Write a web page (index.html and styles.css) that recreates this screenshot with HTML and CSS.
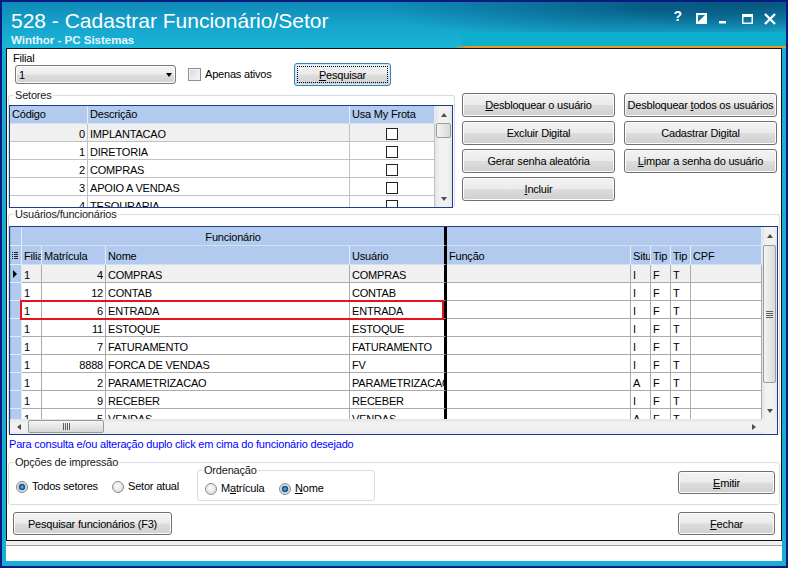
FILE: index.html
```html
<!DOCTYPE html>
<html lang="pt-BR">
<head>
  <meta charset="UTF-8">
  <meta name="viewport" content="width=device-width, initial-scale=1.0">
  <title>528 - Cadastrar Funcionário/Setor</title>
  <link rel="stylesheet" href="styles.css">
</head>
<body>
  <div class="window">
    <div class="titlebar">
      <div class="title-text">
        <h1>528 - Cadastrar Funcionário/Setor</h1>
        <div class="subtitle">Winthor - PC Sistemas</div>
      </div>
      <div class="controls">
        <span class="ctl-help">?</span>
        <svg class="ctl-icons" width="81" height="12" viewBox="0 0 81 12">
          <rect x="0" y="0" width="11" height="11" fill="#fff"/>
          <polygon points="2,2 9,2 2,9" fill="#0d7aa3"/>
          <rect x="23" y="8" width="7" height="2.5" fill="#fff"/>
          <rect x="46" y="1" width="11" height="3" fill="#fff"/>
          <rect x="46.75" y="1.75" width="9.5" height="8.5" fill="none" stroke="#fff" stroke-width="1.5"/>
          <path d="M69 1 L79 11 M79 1 L69 11" stroke="#fff" stroke-width="2.4" fill="none"/>
        </svg>
      </div>
      <div class="title-band"></div>
      <div class="title-line"></div>
    </div>

    <div class="panel">
      <!-- Filial / pesquisa -->
      <div class="filter-row">
        <div class="field-filial">
          <label>Filial</label>
          <div class="combo"><span>1</span><span class="arr-down dark"></span></div>
        </div>
        <label class="check chk-apenas"><span class="check-box"></span><span>Apenas ativos</span></label>
        <button class="btn btn-focus btn-pesquisar"><u>P</u>esquisar</button>
      </div>

      <div class="middle">
        <fieldset class="group group-setores">
          <legend>Setores</legend>
          <div class="grid grid-setores">
            <div class="grid-body">
              <div class="stable">
                <div class="c h">Código</div>
                <div class="c h">Descrição</div>
                <div class="c h">Usa My Frota</div>

                <div class="c num cur">0</div>
                <div class="c cur">IMPLANTACAO</div>
                <div class="c cur chk-cell"><span class="cbx"></span></div>

                <div class="c num">1</div>
                <div class="c">DIRETORIA</div>
                <div class="c chk-cell"><span class="cbx"></span></div>

                <div class="c num">2</div>
                <div class="c">COMPRAS</div>
                <div class="c chk-cell"><span class="cbx"></span></div>

                <div class="c num">3</div>
                <div class="c">APOIO A VENDAS</div>
                <div class="c chk-cell"><span class="cbx"></span></div>

                <div class="c num">4</div>
                <div class="c">TESOURARIA</div>
                <div class="c chk-cell"><span class="cbx"></span></div>
              </div>
            </div>
            <div class="vscroll vscroll-setores">
              <div class="sb-btn"><span class="arr-up"></span></div>
              <div class="sb-thumb-v thumb-setores"></div>
              <div class="sb-space"></div>
              <div class="sb-btn"><span class="arr-down"></span></div>
            </div>
          </div>
        </fieldset>

        <div class="actions">
          <button class="btn"><u>D</u>esbloquear o usuário</button>
          <button class="btn">Desbloquear <u>t</u>odos os usuários</button>
          <button class="btn">Excluir Digital</button>
          <button class="btn">Cadastrar Digital</button>
          <button class="btn">Gerar senha aleatória</button>
          <button class="btn"><u>L</u>impar a senha do usuário</button>
          <button class="btn"><u>I</u>ncluir</button>
        </div>
      </div>

      <fieldset class="group group-usuarios">
        <legend>Usuários/funcionários</legend>
        <div class="grid grid-func">
          <div class="grid-body">
            <div class="ftable">
              <div class="c h ind"></div>
              <div class="c h gh split">Funcionário</div>
              <div class="c h gh-rest"></div>

              <div class="c h ind">
                <svg class="ico-cols" width="6" height="8" viewBox="0 0 6 8">
                  <rect x="0" y="0" width="1" height="1" fill="#222"/><rect x="2" y="0" width="4" height="1" fill="#222"/>
                  <rect x="0" y="2" width="1" height="1" fill="#222"/><rect x="2" y="2" width="4" height="1" fill="#222"/>
                  <rect x="0" y="4" width="1" height="1" fill="#222"/><rect x="2" y="4" width="4" height="1" fill="#222"/>
                  <rect x="0" y="6" width="1" height="1" fill="#222"/><rect x="2" y="6" width="4" height="1" fill="#222"/>
                </svg>
              </div>
              <div class="c h">Filial</div>
              <div class="c h">Matrícula</div>
              <div class="c h">Nome</div>
              <div class="c h split">Usuário</div>
              <div class="c h">Função</div>
              <div class="c h">Situ</div>
              <div class="c h">Tip</div>
              <div class="c h">Tip</div>
              <div class="c h">CPF</div>

              <div class="c ind"><svg class="ico-cur" width="4" height="8" viewBox="0 0 4 8"><polygon points="0,0 4,4 0,8" fill="#000"/></svg></div>
              <div class="c cur">1</div><div class="c num cur">4</div><div class="c cur">COMPRAS</div><div class="c cur split">COMPRAS</div>
              <div class="c cur"></div><div class="c cur">I</div><div class="c cur">F</div><div class="c cur">T</div><div class="c cur"></div>

              <div class="c ind"></div>
              <div class="c">1</div><div class="c num">12</div><div class="c">CONTAB</div><div class="c split">CONTAB</div>
              <div class="c"></div><div class="c">I</div><div class="c">F</div><div class="c">T</div><div class="c"></div>

              <div class="c ind"></div>
              <div class="c">1</div><div class="c num">6</div><div class="c">ENTRADA</div><div class="c split">ENTRADA</div>
              <div class="c"></div><div class="c">I</div><div class="c">F</div><div class="c">T</div><div class="c"></div>

              <div class="c ind"></div>
              <div class="c">1</div><div class="c num">11</div><div class="c">ESTOQUE</div><div class="c split">ESTOQUE</div>
              <div class="c"></div><div class="c">I</div><div class="c">F</div><div class="c">T</div><div class="c"></div>

              <div class="c ind"></div>
              <div class="c">1</div><div class="c num">7</div><div class="c">FATURAMENTO</div><div class="c split">FATURAMENTO</div>
              <div class="c"></div><div class="c">I</div><div class="c">F</div><div class="c">T</div><div class="c"></div>

              <div class="c ind"></div>
              <div class="c">1</div><div class="c num">8888</div><div class="c">FORCA DE VENDAS</div><div class="c split">FV</div>
              <div class="c"></div><div class="c">I</div><div class="c">F</div><div class="c">T</div><div class="c"></div>

              <div class="c ind"></div>
              <div class="c">1</div><div class="c num">2</div><div class="c">PARAMETRIZACAO</div><div class="c split">PARAMETRIZACAO</div>
              <div class="c"></div><div class="c">A</div><div class="c">F</div><div class="c">T</div><div class="c"></div>

              <div class="c ind"></div>
              <div class="c">1</div><div class="c num">9</div><div class="c">RECEBER</div><div class="c split">RECEBER</div>
              <div class="c"></div><div class="c">I</div><div class="c">F</div><div class="c">T</div><div class="c"></div>

              <div class="c ind"></div>
              <div class="c">1</div><div class="c num">5</div><div class="c">VENDAS</div><div class="c split">VENDAS</div>
              <div class="c"></div><div class="c">A</div><div class="c">F</div><div class="c">T</div><div class="c"></div>
            </div>
            <!-- destaque da linha selecionada -->
            <div class="highlight"></div>
          </div>
          <div class="vscroll">
            <div class="sb-btn"><span class="arr-up"></span></div>
            <div class="sb-thumb-v thumb-func"><span class="grip-v"></span></div>
            <div class="sb-space"></div>
            <div class="sb-btn"><span class="arr-down"></span></div>
          </div>
          <div class="hscroll">
            <div class="sb-btn-h"><span class="arr-left"></span></div>
            <div class="sb-thumb-h"><span class="grip-h"></span></div>
            <div class="sb-space"></div>
            <div class="sb-btn-h"><span class="arr-right"></span></div>
          </div>
          <div class="corner"></div>
        </div>
      </fieldset>

      <p class="hint">Para consulta e/ou alteração duplo click em cima do funcionário desejado</p>

      <fieldset class="group group-opcoes">
        <legend>Opções de impressão</legend>
        <label class="radio radio-todos"><span class="radio-dot checked"></span><span>Todos setores</span></label>
        <label class="radio radio-setor"><span class="radio-dot"></span><span>Setor atual</span></label>
        <fieldset class="group group-ordem">
          <legend>Ordenação</legend>
          <label class="radio radio-matricula"><span class="radio-dot"></span><span>M<u>a</u>trícula</span></label>
          <label class="radio"><span class="radio-dot checked"></span><span><u>N</u>ome</span></label>
        </fieldset>
        <button class="btn btn-emitir"><u>E</u>mitir</button>
      </fieldset>

      <div class="bottom-row">
        <button class="btn btn-pesq-func">Pesquisar funcionários (F3)</button>
        <button class="btn btn-fechar"><u>F</u>echar</button>
      </div>
    </div>

    <div class="statusbar"><div class="status-field"></div></div>
  </div>
</body>
</html>
```

FILE: styles.css
```css
* {
  box-sizing: border-box;
}

body {
  margin: 0;
  background: #0b1a80;
  font-family: "Liberation Sans", Arial, sans-serif;
}

.window {
  width: 788px;
  height: 568px;
  border: 2px solid #0b1a80;
  background: #1aafd2;
  padding: 0 4px 5px;
  display: flex;
  flex-direction: column;
}

/* Barra de título */
.titlebar {
  position: relative;
  flex: none;
  height: 46px;
  margin: 0 -4px;
  padding: 0 9px;
  display: flex;
  justify-content: space-between;
  color: #fff;
  background:
    radial-gradient(ellipse 260px 34px at 640px 6px, rgba(0, 55, 95, 0.55), rgba(0, 55, 95, 0) 100%),
    radial-gradient(ellipse 160px 30px at 760px 0, rgba(0, 45, 80, 0.45), rgba(0, 45, 80, 0) 100%),
    linear-gradient(#0f89b6, #16a6cd 55%, #1ab6d9);
}

.title-text h1 {
  margin: 7px 0 0;
  font-size: 21px;
  font-weight: normal;
  line-height: 24px;
}

.subtitle {
  margin-top: 1px;
  font-size: 11.5px;
  font-weight: bold;
  line-height: 13px;
  color: #e8f6fb;
}

.controls {
  position: relative;
  z-index: 1;
  display: flex;
  align-items: flex-start;
}

.ctl-help {
  margin: 7px 14px 0 0;
  font-size: 14px;
  font-weight: bold;
  line-height: 14px;
}

.ctl-icons {
  margin-top: 11px;
}

.title-band {
  position: absolute;
  left: 460px;
  right: 0;
  top: 30px;
  height: 14px;
  background: #0cb0cc;
}

.title-line {
  position: absolute;
  left: 454px;
  right: 0;
  top: 44px;
  height: 2px;
  background: linear-gradient(90deg, rgba(232, 150, 30, 0.3), #e8961e 12px);
}

/* Painel principal */
.panel {
  flex: none;
  height: 493px;
  background: #fff;
  border: 1px solid #111;
  font-size: 11px;
  letter-spacing: -0.2px;
  color: #000;
  display: flex;
  flex-direction: column;
}

.filter-row {
  display: flex;
  align-items: flex-start;
  padding: 3px 0 0 8px;
}

.field-filial {
  width: 161px;
}

.field-filial label {
  display: block;
  margin-left: -2px;
  line-height: 13px;
}

.combo {
  height: 19px;
  padding: 0 3px 0 3px;
  display: flex;
  align-items: center;
  justify-content: space-between;
  border: 1px solid #7a7a7a;
  border-radius: 3px;
  background: linear-gradient(#f4f4f4 0%, #ececec 48%, #dedede 52%, #d2d2d2 100%);
  box-shadow: inset 0 0 0 1px #fbfbfb;
}

.check {
  display: flex;
  align-items: center;
  gap: 4px;
  line-height: 13px;
}

.chk-apenas {
  width: 106px;
  margin: 16px 0 0 12px;
}

.check-box {
  width: 13px;
  height: 13px;
  flex: none;
  border: 1px solid #8e8f8f;
  background: linear-gradient(135deg, #d8d8d8, #f9f9f9);
  box-shadow: inset 0 0 0 1px #f2f2f2;
}

/* Botões */
.btn {
  font: inherit;
  letter-spacing: inherit;
  color: #000;
  height: 23px;
  padding: 0;
  border: 1px solid #707070;
  border-radius: 3px;
  background: linear-gradient(#f3f3f3 0%, #ebebeb 48%, #dddddd 52%, #cfcfcf 100%);
  box-shadow: inset 0 0 0 1px #fcfcfc;
  white-space: nowrap;
}

.btn-focus {
  border-color: #3c7fb1;
  box-shadow: inset 0 0 0 1px #c4eefc;
  outline: 1px dotted #000;
  outline-offset: -4px;
}

.btn-pesquisar {
  width: 97px;
  margin-top: 11px;
}

.middle {
  display: flex;
  align-items: flex-start;
  margin-top: 3px;
  padding-left: 1px;
}

/* Caixas de grupo */
.group {
  margin: 0;
  min-width: 0;
  border: 1px solid #d3dde3;
  border-radius: 3px;
}

.group legend {
  padding: 0 1px;
  margin-left: 5px;
  line-height: 13px;
  color: #1a1a1a;
}

.group-setores {
  width: 447px;
  padding: 3px 1px 0 0;
  border-bottom: none;
}

.actions {
  display: grid;
  grid-template-columns: 153px 153px;
  grid-auto-rows: 24px;
  gap: 4px 9px;
  margin: 4px 0 0 7px;
}

.actions .btn {
  height: 24px;
}

.group-usuarios {
  width: 772px;
  margin-left: 1px;
  padding: 5px 1px 0 0;
  border-bottom: none;
}

.hint {
  margin: 3px 0 0;
  padding-left: 2px;
  line-height: 13px;
  color: #0000ff;
}

.group-opcoes {
  width: 772px;
  margin: 5px 0 0 1px;
  padding: 0 4px 3px 7px;
  display: flex;
  align-items: flex-start;
}

.group-opcoes > legend,
.group-ordem > legend {
  margin-left: -2px;
}

.radio {
  display: flex;
  align-items: center;
  gap: 4px;
  line-height: 13px;
}

.radio-todos {
  width: 96px;
  margin-top: 11px;
}

.radio-setor {
  width: 85px;
  margin-top: 11px;
}

.group-ordem {
  width: 178px;
  margin-top: -5px;
  padding: 5px 0 5px 7px;
  display: flex;
}

.radio-matricula {
  width: 74px;
}

.radio-dot {
  width: 12px;
  height: 12px;
  flex: none;
  border: 1px solid #8a8b8b;
  border-radius: 50%;
  background: radial-gradient(circle at 45% 40%, #fbfbfb, #d6d6d6);
}

.radio-dot.checked {
  background: radial-gradient(circle at 50% 50%, #6fb8ec 0, #2567a8 2px, #1c4f86 3px, #cfd6dc 3.6px, #f0f0f0 100%);
}

.btn-emitir {
  width: 97px;
  margin: 2px 0 0 auto;
}

.bottom-row {
  display: flex;
  justify-content: space-between;
  margin-top: 7px;
  padding: 0 6px;
}

.btn-pesq-func {
  width: 159px;
}

.btn-fechar {
  width: 97px;
}

.statusbar {
  flex: none;
  height: 20px;
  padding-top: 4px;
  background: #f0f0f0;
}

.status-field {
  height: 16px;
  border-top: 1px solid #a0a0a0;
  background: #fff;
}

/* Grades */
.grid {
  border: 1px solid #1c3b8f;
  background: #fff;
}

.grid-setores {
  display: flex;
  width: 444px;
  height: 103px;
}

.grid-setores .grid-body {
  width: 425px;
  height: 101px;
  overflow: hidden;
}

.stable {
  display: grid;
  grid-template-columns: 78px 262px 85px;
  grid-auto-rows: 18px;
}

.c {
  padding: 0 2px;
  border-right: 1px solid #ababab;
  border-bottom: 1px solid #ababab;
  white-space: nowrap;
  overflow: hidden;
  line-height: 20px;
}

.stable .c {
  border-color: #c2c2c2;
}

.c.h {
  background: #b1caee;
  border-right: 1px solid #e4ecf9;
  border-bottom: 1px solid #d3e0f4;
  line-height: 17px;
}

.ftable .c.h {
  line-height: 20px;
}

.num {
  text-align: right;
}

.cur {
  background: #f0f0f0;
}

.chk-cell {
  display: flex;
  justify-content: center;
  align-items: flex-start;
}

.cbx {
  width: 12px;
  height: 12px;
  margin-top: 4px;
  border: 1px solid #222;
  background: #fff;
}

.grid-func {
  display: grid;
  grid-template-columns: 752px 15px;
  grid-template-rows: 192px 15px;
  width: 769px;
  height: 209px;
}

.grid-func .grid-body {
  position: relative;
  overflow: hidden;
}

.ftable {
  display: grid;
  grid-template-columns: 12px 20px 64px 244px 97px 184px 20px 20px 20px 71px;
  grid-template-rows: 19px 19px;
  grid-auto-rows: 18px;
}

.ftable .c.ind,
.ftable .c.h.ind {
  padding: 0;
  background: #b1caee;
  border-right: 1px solid #e4ecf9;
  border-bottom: 1px solid #e4ecf9;
  box-shadow: inset 1px 0 0 #8eaedf;
}

.ico-cols {
  display: block;
  margin: 6px 0 0 2px;
}

.ico-cur {
  display: block;
  margin: 5px 0 0 3px;
}

.gh {
  grid-column: span 4;
  text-align: center;
}

.gh-rest {
  grid-column: span 5;
}

.ftable .split,
.ftable .c.h.split {
  border-right: 3px solid #000;
}

.highlight {
  position: absolute;
  left: 10px;
  top: 73px;
  width: 424px;
  height: 20px;
  border: 2px solid #e3141b;
}

/* Barras de rolagem */
.vscroll {
  display: flex;
  flex-direction: column;
  background: linear-gradient(90deg, #e3e3e3, #f1f1f1 25%, #f1f1f1 75%, #e6e6e6);
}

.vscroll-setores {
  width: 17px;
}

.sb-btn {
  flex: none;
  height: 17px;
  display: flex;
  align-items: center;
  justify-content: center;
}

.sb-btn-h {
  flex: none;
  width: 17px;
  display: flex;
  align-items: center;
  justify-content: center;
}

.sb-space {
  flex: 1;
}

.sb-thumb-v {
  margin: 0 1px;
  border: 1px solid #9b9b9b;
  border-radius: 2px;
  background: linear-gradient(90deg, #f5f5f5, #e6e6e6 50%, #d9d9d9);
  display: flex;
  align-items: center;
  justify-content: center;
}

.thumb-setores {
  height: 15px;
}

.thumb-func {
  height: 138px;
  margin-top: 1px;
}

.hscroll {
  display: flex;
  background: linear-gradient(#e3e3e3, #f1f1f1 25%, #f1f1f1 75%, #e6e6e6);
}

.sb-thumb-h {
  width: 76px;
  margin: 1px 0 1px 1px;
  border: 1px solid #9b9b9b;
  border-radius: 2px;
  background: linear-gradient(#f5f5f5, #e6e6e6 50%, #d9d9d9);
  display: flex;
  align-items: center;
  justify-content: center;
}

.grip-v {
  width: 7px;
  height: 7px;
  background: repeating-linear-gradient(#5e5e5e 0 1px, transparent 1px 2px);
}

.grip-h {
  width: 7px;
  height: 7px;
  background: repeating-linear-gradient(90deg, #5e5e5e 0 1px, transparent 1px 2px);
}

.corner {
  background: #f0f0f0;
}

.arr-up,
.arr-down,
.arr-left,
.arr-right {
  width: 0;
  height: 0;
  border: 3.5px solid transparent;
}

.arr-up {
  border-top: 0;
  border-bottom: 4px solid #4d4d4d;
}

.arr-down {
  border-bottom: 0;
  border-top: 4px solid #4d4d4d;
}

.arr-down.dark {
  border-width: 4px 3.5px 0;
  border-top-color: #000;
}

.arr-left {
  border-left: 0;
  border-right: 4px solid #4d4d4d;
}

.arr-right {
  border-right: 0;
  border-left: 4px solid #4d4d4d;
}
```
